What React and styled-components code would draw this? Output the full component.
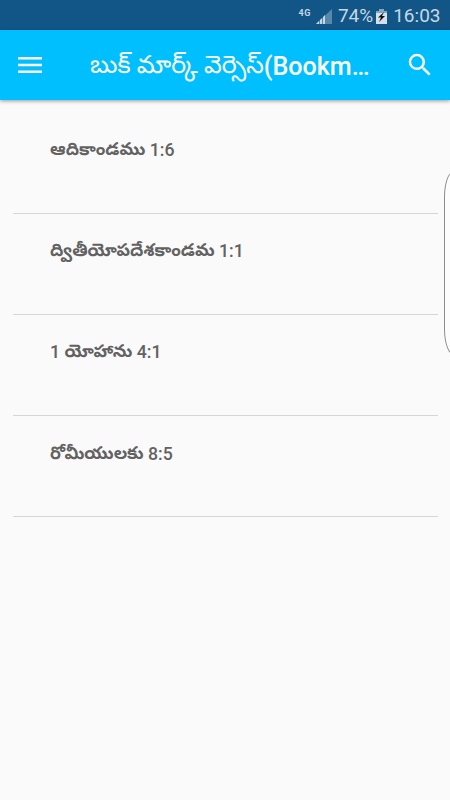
import React from 'react';
import styled, { createGlobalStyle } from 'styled-components';

const GlobalStyle = createGlobalStyle`
  * {
    box-sizing: border-box;
  }

  body {
    margin: 0;
    background: #fafafa;
    overflow: hidden;
  }
`;

const Screen = styled.div`
  position: relative;
  display: flex;
  flex-direction: column;
  width: 450px;
  height: 800px;
  overflow: hidden;
  background: #fafafa;
  font-family: Roboto, 'Noto Sans Telugu', 'Noto Sans', sans-serif;
`;

const StatusBar = styled.div`
  display: flex;
  flex: none;
  align-items: center;
  justify-content: flex-end;
  height: 30px;
  padding: 2px 9.5px 0 0;
  background: #125688;
  color: #c6d8e5;
  font-size: 19px;
  line-height: 28px;
  white-space: nowrap;
`;

const Network = styled.span`
  margin: -6px 5px 0 0;
  font-size: 9px;
  font-weight: 700;
  letter-spacing: 0.5px;
  line-height: 12px;
`;

const Percent = styled.span`
  margin: 0 3px 0 6px;
`;

const Clock = styled.span`
  margin-left: 6px;
`;

const Toolbar = styled.header`
  display: flex;
  flex: none;
  align-items: center;
  height: 70px;
  padding: 0 15px 0 17px;
  background: #00bfff;
  color: #ffffff;
  box-shadow: 0 1px 4px rgba(0, 0, 0, 0.4);
`;

const IconButton = styled.button`
  display: flex;
  flex: none;
  padding: 0;
  border: 0;
  background: none;
  color: inherit;
`;

const Title = styled.h1`
  flex: 1;
  margin: 0 0 0 47px;
  padding-top: 3px;
  font-size: 25.1px;
  font-weight: 500;
  line-height: 40px;
  white-space: nowrap;
`;

const TitleTelugu = styled.span`
  font-size: 25px;
  font-weight: 400;
  line-height: 0;
  vertical-align: 2px;
`;

const List = styled.ul`
  flex: 1;
  margin: 0;
  padding: 12.6px 12px 0 13px;
  list-style: none;
`;

const Verse = styled.li`
  height: 101.2px;
  padding: 24.5px 0 0 37px;
  border-bottom: 1px solid #d6d6d6;
  color: #626262;
  font-size: 17.7px;
  font-weight: 500;
  line-height: 26px;
  white-space: nowrap;
`;

const Book = styled.span`
  font-size: 17.5px;
  font-weight: 700;
  line-height: 0;
  vertical-align: 1px;
`;

// Edge panel that slides in from the right side
const EdgePanel = styled.div`
  position: absolute;
  top: 171px;
  right: -14px;
  width: 20px;
  height: 184px;
  border: 1px solid #8c8c8c;
  border-radius: 10px / 26px;
  background: #fdfdfd;
`;

const verses = [
  { id: 1, book: 'ఆదికాండము', verse: '1:6' },
  { id: 2, book: 'ద్వితీయోపదేశకాండమ', verse: '1:1' },
  { id: 3, prefix: '1 ', book: 'యోహాను', verse: '4:1' },
  { id: 4, book: 'రోమీయులకు', verse: '8:5' },
];

const SignalIcon = () => (
  <svg width="16" height="15" viewBox="0 0 16 15">
    <path d="M0 15L16 0V15z" fill="#5789ab" />
    <path d="M0 15l3-3v3zM4 15v-4l2-2v6zM7 15V8l2-2v9z" fill="#c6d8e5" />
  </svg>
);

const BatteryIcon = () => (
  <svg width="11" height="15" viewBox="0 0 11 15">
    <path d="M3 0h5v2h3v13H0V2h3z" fill="#d3e1eb" />
    <path d="M3 0h5v2h3v2H0V2h3z" fill="#84a7c0" />
    <path d="M8 3L2 8.5h3L3 13l6-6H6z" fill="#111" />
  </svg>
);

const MenuIcon = () => (
  <svg width="26" height="18" viewBox="0 0 26 18" fill="currentColor">
    <path d="M1 1h24v2.6H1zM1 7.7h24v2.6H1zM1 14.4h24V17H1z" />
  </svg>
);

const SearchIcon = () => (
  <svg width="30" height="30" viewBox="0 0 24 24" fill="currentColor">
    <path d="M15.5 14h-.79l-.28-.27A6.471 6.471 0 0 0 16 9.5 6.5 6.5 0 1 0 9.5 16c1.61 0 3.09-.59 4.23-1.57l.27.28v.79l5 4.99L20.49 19l-4.99-5zm-6 0C7.01 14 5 11.99 5 9.5S7.01 5 9.5 5 14 7.01 14 9.5 11.99 14 9.5 14z" />
  </svg>
);

const App = () => {
  return (
    <>
      <GlobalStyle />
      <Screen>
        <StatusBar>
          <Network>4G</Network>
          <SignalIcon />
          <Percent>74%</Percent>
          <BatteryIcon />
          <Clock>16:03</Clock>
        </StatusBar>
        <Toolbar>
          <IconButton aria-label="Menu">
            <MenuIcon />
          </IconButton>
          <Title>
            <TitleTelugu>బుక్ మార్క్ వెర్సెస్</TitleTelugu>(Bookm…
          </Title>
          <IconButton aria-label="Search">
            <SearchIcon />
          </IconButton>
        </Toolbar>
        <List>
          {verses.map((item) => (
            <Verse key={item.id}>
              {item.prefix}
              <Book>{item.book}</Book> {item.verse}
            </Verse>
          ))}
        </List>
        <EdgePanel />
      </Screen>
    </>
  );
};

export default App;
